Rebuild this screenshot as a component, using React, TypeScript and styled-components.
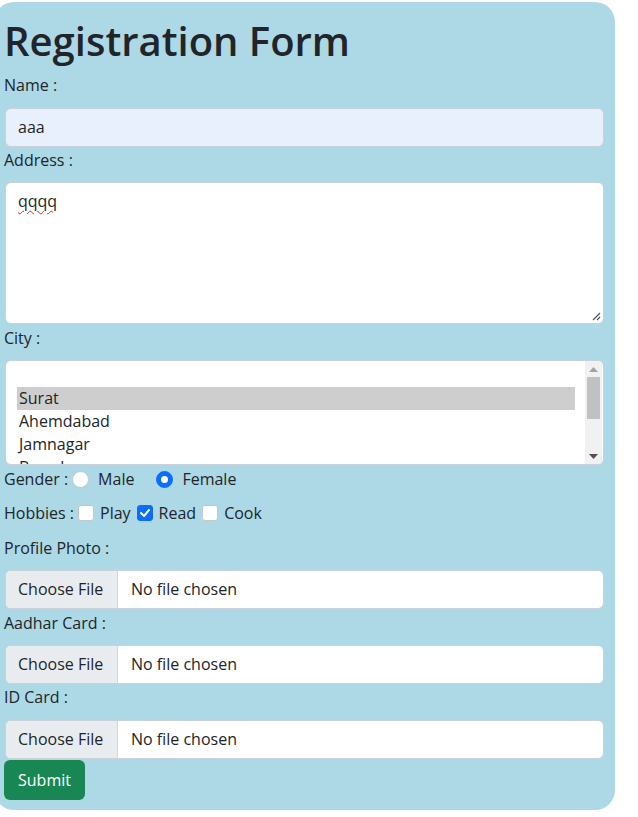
import React from "react";
import styled, { createGlobalStyle } from "styled-components";

const Global = createGlobalStyle`
  html, body { margin: 0; padding: 0; background: #ffffff; }
  body { font-family: "Open Sans", "Noto Sans", sans-serif; color: #212529; font-size: 16px; line-height: 24px; }
  * { box-sizing: border-box; }
`;

const Panel = styled.div`
  margin: 2px 0 0 -6px;
  width: 621px;
  background: #add8e6;
  border-radius: 20px;
  padding: 15px 11px 10px 10px;
  display: flex;
  flex-direction: column;
  align-items: stretch;
`;

const Title = styled.h1`
  margin: 0 0 8px 0;
  font-size: 40px;
  line-height: 48px;
  font-weight: 600;
  letter-spacing: 0px;
`;

const Label = styled.div<{ $mb: number }>`
  height: 24px;
  line-height: 24px;
  margin-bottom: ${(p) => p.$mb}px;
`;

const Control = styled.div<{ $h: number; $mb: number; $bg?: string }>`
  margin-left: 1px;
  width: 599px;
  height: ${(p) => p.$h}px;
  margin-bottom: ${(p) => p.$mb}px;
  background: ${(p) => p.$bg || "#ffffff"};
  border: 1px solid #c9d2da;
  border-radius: 6px;
  position: relative;
  overflow: hidden;
`;

const InputText = styled.div`
  padding: 6px 12px;
  line-height: 24px;
  color: #212529;
`;

const AreaText = styled.span`
  text-decoration: underline wavy #e02020;
  text-decoration-thickness: 1px;
  text-underline-offset: 3px;
`;

const Grip = styled.svg`
  position: absolute;
  right: 2px;
  bottom: 2px;
`;

const ListWrap = styled.div`
  display: flex;
  height: 100%;
`;

const Options = styled.div`
  flex: 1;
  padding: 3px 10px 0 11px;
`;

const Option = styled.div<{ $sel?: boolean }>`
  height: 23px;
  line-height: 23px;
  padding-left: 2px;
  background: ${(p) => (p.$sel ? "#cecece" : "transparent")};
  color: #212529;
`;

const Scrollbar = styled.div`
  width: 17px;
  margin: 0 1px 0 0;
  background: #f1f1f1;
  display: flex;
  flex-direction: column;
  align-items: center;
`;

const ArrowBox = styled.div`
  height: 16px;
  width: 100%;
  display: flex;
  align-items: center;
  justify-content: center;
`;

const Thumb = styled.div`
  width: 13px;
  height: 42px;
  background: #c1c1c1;
`;

const Spacer = styled.div`
  flex: 1;
`;

const Row = styled.div<{ $mb: number }>`
  display: flex;
  align-items: center;
  height: 24px;
  margin-bottom: ${(p) => p.$mb}px;
`;

const Radio = styled.span<{ $on?: boolean; $ml: number }>`
  width: 17px;
  height: 17px;
  border-radius: 50%;
  margin-left: ${(p) => p.$ml}px;
  margin-right: 9px;
  background: ${(p) => (p.$on ? "#0d6efd" : "#ffffff")};
  border: 1px solid ${(p) => (p.$on ? "#0d6efd" : "#c4c8cc")};
  display: inline-flex;
  align-items: center;
  justify-content: center;
  &::after {
    content: "";
    display: ${(p) => (p.$on ? "block" : "none")};
    width: 7px;
    height: 7px;
    border-radius: 50%;
    background: #ffffff;
  }
`;

const Check = styled.span<{ $on?: boolean; $ml: number }>`
  width: 16px;
  height: 16px;
  border-radius: 3px;
  margin-left: ${(p) => p.$ml}px;
  margin-right: 6px;
  background: ${(p) => (p.$on ? "#0d6efd" : "#ffffff")};
  border: 1px solid ${(p) => (p.$on ? "#0d6efd" : "#c4c8cc")};
  display: inline-flex;
  align-items: center;
  justify-content: center;
`;

const FileBox = styled.div`
  display: flex;
  height: 100%;
`;

const FileButton = styled.div`
  width: 112px;
  background: #e9ecef;
  border-right: 1px solid #d3d8dd;
  padding-left: 12px;
  line-height: 37px;
`;

const FileName = styled.div`
  padding-left: 13px;
  line-height: 37px;
`;

const Submit = styled.button`
  align-self: flex-start;
  height: 40px;
  padding: 0 14px;
  background: #198754;
  color: #ffffff;
  border: none;
  border-radius: 6px;
  font-family: inherit;
  font-size: 16px;
  line-height: 24px;
`;

function FileInput({ mb }: { mb: number }) {
  return (
    <Control $h={39} $mb={mb}>
      <FileBox>
        <FileButton>Choose File</FileButton>
        <FileName>No file chosen</FileName>
      </FileBox>
    </Control>
  );
}

export default function App() {
  return (
    <>
      <Global />
      <Panel>
        <Title>Registration Form</Title>
        <Label $mb={11}>Name :</Label>
        <Control $h={39} $mb={1} $bg="#e8f0fe">
          <InputText>aaa</InputText>
        </Control>
        <Label $mb={10}>Address :</Label>
        <Control $h={142} $mb={2}>
          <InputText>
            <AreaText>qqqq</AreaText>
          </InputText>
          <Grip width="9" height="9" viewBox="0 0 9 9">
            <path d="M8 1 L1 8 M8 5 L5 8" stroke="#555" strokeWidth="1.2" />
          </Grip>
        </Control>
        <Label $mb={10}>City :</Label>
        <Control $h={105} $mb={2}>
          <ListWrap>
            <Options>
              <Option>&nbsp;</Option>
              <Option $sel>Surat</Option>
              <Option>Ahemdabad</Option>
              <Option>Jamnagar</Option>
              <Option>Baroda</Option>
            </Options>
            <Scrollbar>
              <ArrowBox>
                <svg width="9" height="5" viewBox="0 0 9 5">
                  <path d="M0 5 L4.5 0 L9 5 Z" fill="#a3a3a3" />
                </svg>
              </ArrowBox>
              <Thumb />
              <Spacer />
              <ArrowBox>
                <svg width="9" height="5" viewBox="0 0 9 5">
                  <path d="M0 0 L4.5 5 L9 0 Z" fill="#505050" />
                </svg>
              </ArrowBox>
            </Scrollbar>
          </ListWrap>
        </Control>
        <Row $mb={10}>
          Gender :
          <Radio $ml={4} />
          Male
          <Radio $on $ml={22} />
          Female
        </Row>
        <Row $mb={11}>
          Hobbies :
          <Check $ml={4} />
          Play
          <Check $on $ml={6}>
            <svg width="10" height="8" viewBox="0 0 10 8">
              <path d="M1 4 L4 7 L9 1" stroke="#fff" strokeWidth="2" fill="none" strokeLinecap="round" strokeLinejoin="round" />
            </svg>
          </Check>
          Read
          <Check $ml={6} />
          Cook
        </Row>
        <Label $mb={10}>Profile Photo :</Label>
        <FileInput mb={2} />
        <Label $mb={10}>Aadhar Card :</Label>
        <FileInput mb={1} />
        <Label $mb={11}>ID Card :</Label>
        <FileInput mb={1} />
        <Submit>Submit</Submit>
      </Panel>
    </>
  );
}
